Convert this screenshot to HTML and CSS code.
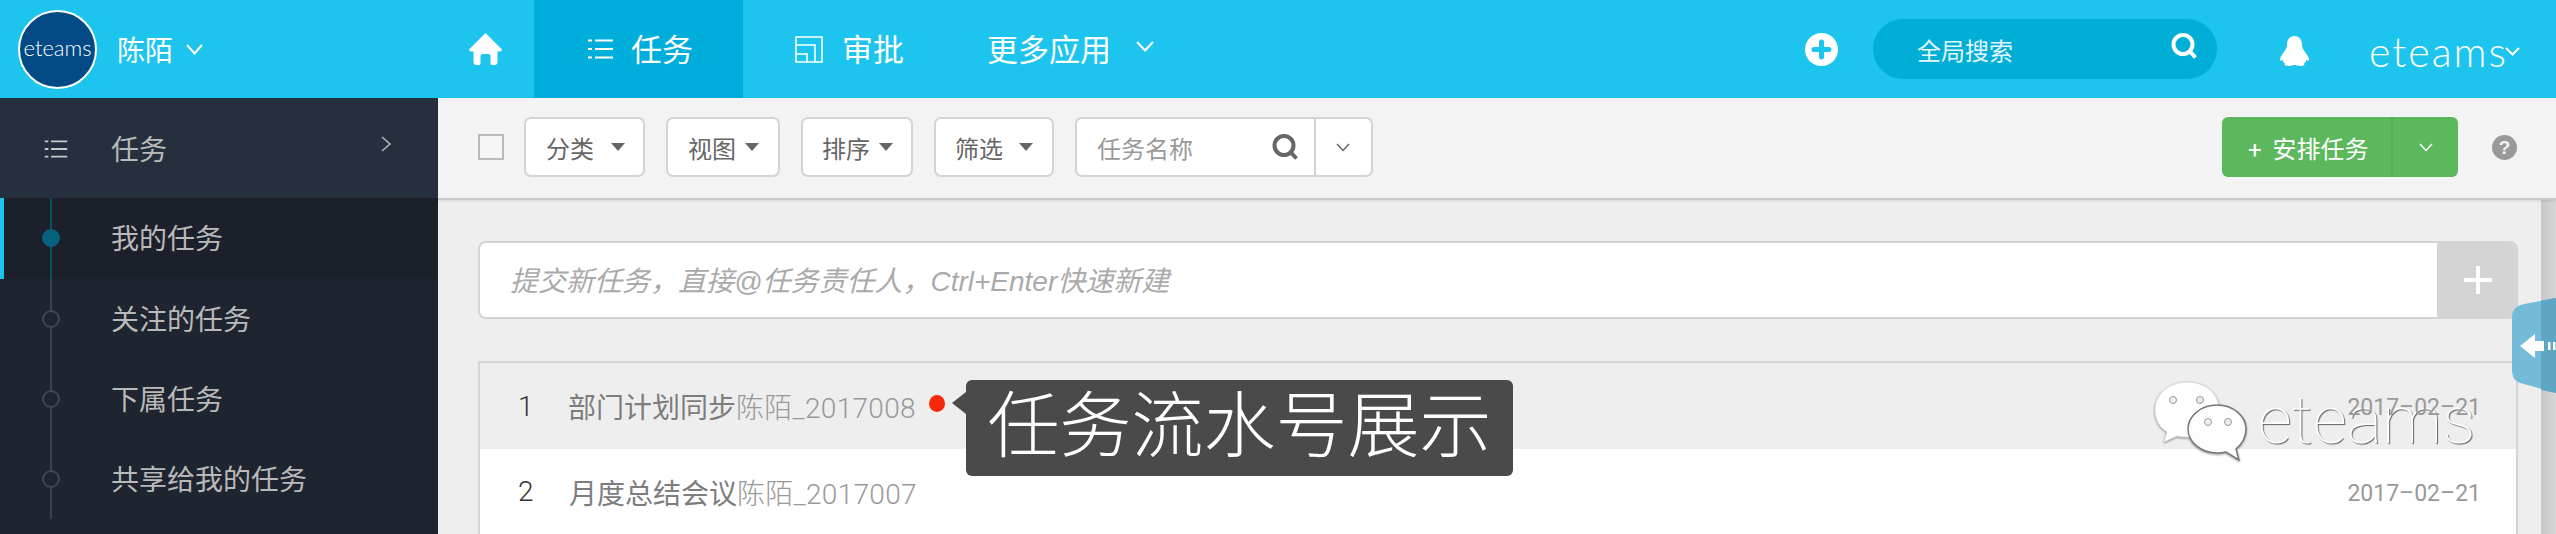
FILE: index.html
```html
<!DOCTYPE html>
<html lang="zh-CN">
<head>
<meta charset="utf-8">
<title>任务</title>
<link rel="stylesheet" href="styles.css">
</head>
<body>
<div class="page">
  <header class="hd">
    <div class="brand">
      <div class="logo">eteams</div>
      <span class="user">陈陌</span>
      <svg class="chev user-chev" viewBox="0 0 17 11"><path d="M1 1l7.500 8.500L16 1"/></svg>
    </div>
    <svg class="home" viewBox="0 0 33 32"><path d="M16.500 0L33 16.500q0 2-2 2h-2.500V29q0 3-3 3H23q-1.500 0-1.500-1.500V23q0-2-2-2h-6q-2 0-2 2v7.500Q11.500 32 10 32H7.500q-3 0-3-3V18.500H2q-2 0-2-2z"/></svg>
    <nav class="nav">
      <a class="tab active">
        <svg class="list-ic" viewBox="0 0 25 20"><path d="M0 1.500h4M7 1.500h18M0 10h4M7 10h18M0 18.500h4M7 18.500h18"/></svg>
        <span>任务</span>
      </a>
      <a class="tab approve">
        <svg class="appr-ic" viewBox="0 0 28 27"><path d="M1 1h26v25H1zM1 9h19v17M1 18h11v8"/></svg>
        <span>审批</span>
      </a>
      <a class="tab more">
        <span>更多应用</span>
        <svg class="chev more-chev" viewBox="0 0 18 11"><path d="M1 1l8 8.500L17 1"/></svg>
      </a>
    </nav>
    <div class="hd-right">
      <svg class="add" viewBox="0 0 33 33"><circle cx="16.500" cy="16.500" r="16.500" fill="#fff"/><path d="M16.500 9v15M9 16.500h15" stroke="#1dc4ee" stroke-width="5" stroke-linecap="round"/></svg>
      <div class="pill">
        <span>全局搜索</span>
        <svg class="mag" viewBox="0 0 27 26"><circle cx="12" cy="11.500" r="9.500"/><path d="M18.500 18l6 6.500"/></svg>
      </div>
      <svg class="qq" viewBox="0 0 31 30"><path d="M15.500 0c4.800 0 7.500 3.800 7.500 8.500 0 2.500.7 4 2 6 2.500 3.500 5 6.500 5 9 0 1.500-1 1.500-2.500.5-.3 1.500-1.200 2.500-2.500 3.300 1.300 1.400-.5 2.700-3.500 2.700-2.500 0-4-.5-6-1.200-2 .7-3.500 1.200-6 1.200-3 0-4.800-1.300-3.500-2.700-1.300-.8-2.200-1.800-2.500-3.300C2 25 1 25 1 23.500c0-2.500 2.500-5.500 5-9 1.300-2 2-3.500 2-6C8 3.800 10.700 0 15.500 0z"/></svg>
      <span class="word">eteams</span>
      <svg class="chev word-chev" viewBox="0 0 15 9"><path d="M1 1l6.500 6.500L14 1"/></svg>
    </div>
  </header>

  <div class="body">
    <aside class="side">
      <div class="side-title">
        <svg class="list-ic side-ic" viewBox="0 0 25 20"><path d="M0 1.500h4M7 1.500h18M0 10h4M7 10h18M0 18.500h4M7 18.500h18"/></svg>
        <span>任务</span>
        <svg class="side-arrow" viewBox="0 0 11 16"><path d="M1 1l8 7-8 7"/></svg>
      </div>
      <ul class="side-list">
        <li class="side-item on"><i class="dot"></i>我的任务</li>
        <li class="side-item"><i class="dot"></i>关注的任务</li>
        <li class="side-item"><i class="dot"></i>下属任务</li>
        <li class="side-item"><i class="dot"></i>共享给我的任务</li>
      </ul>
    </aside>

    <main class="main">
      <div class="toolbar">
        <span class="check"></span>
        <button class="btn b-cat">分类<i class="caret"></i></button>
        <button class="btn b-view">视图<i class="caret"></i></button>
        <button class="btn b-sort">排序<i class="caret"></i></button>
        <button class="btn b-filter">筛选<i class="caret"></i></button>
        <div class="find">
          <span class="find-text">任务名称</span>
          <svg class="find-mag" viewBox="0 0 27 26"><circle cx="12" cy="11.500" r="9.500"/><path d="M18.500 18l6 6.500"/></svg>
          <span class="find-more"><svg class="find-chev" viewBox="0 0 14 9"><path d="M1 1l6 6.500L13 1"/></svg></span>
        </div>
        <div class="green">
          <span class="green-main">+ 安排任务</span>
          <span class="green-more"><svg viewBox="0 0 14 9"><path d="M1 1l6 6.500L13 1"/></svg></span>
        </div>
        <span class="help">?</span>
      </div>

      <div class="content">
        <div class="col">
          <div class="quick">
            <span class="quick-text">提交新任务，直接@任务责任人，Ctrl+Enter快速新建</span>
            <span class="quick-add"><svg viewBox="0 0 28 28"><path d="M14 0v28M0 14h28"/></svg></span>
          </div>
          <div class="tasks">
            <div class="task first">
              <span class="num">1</span>
              <span class="name">部门计划同步<em>陈陌_2017008</em></span>
              <i class="red"></i>
              <span class="date">2017–02–21</span>
            </div>
            <div class="task">
              <span class="num">2</span>
              <span class="name second">月度总结会议<em>陈陌_2017007</em></span>
              <span class="date">2017–02–21</span>
            </div>
          </div>
        </div>
        <div class="stripe"></div>
      </div>
    </main>
  </div>

  <div class="tip">任务流水号展示</div>

  <svg class="pull" viewBox="0 0 44 95">
    <path d="M44 0L12 6Q0 8 0 20V72Q0 84 12 86L44 95z" fill="#74bad9"/>
    <path d="M29 2.500L44 0V95L29 92z" fill="#5ea6c4"/>
    <path d="M8 48L23 36V43H32V53H23V60z" fill="#fff"/>
    <path d="M36 44h2.500v8H36zM41 44h2.500v8H41z" fill="#fff"/>
  </svg>

  <div class="mark">
    <svg class="mark-ic" viewBox="0 0 94 80">
      <path d="M33 1C15 1 1 13 1 29c0 9 4 17 12 22l-3 10 13-6c3 1 7 1 10 1 18 0 32-12 32-28S51 1 33 1z" fill="#fff" stroke="#d8d8d8" stroke-width="1"/>
      <circle cx="19" cy="19" r="3.500" fill="#eee" stroke="#999"/>
      <circle cx="46" cy="19" r="3.500" fill="#eee" stroke="#999"/>
      <path d="M63 24C47 24 34 35 34 48s13 24 29 24c3 0 6 0 9-1l13 8-3-11c6-5 10-12 10-20 0-13-13-24-29-24z" fill="#fdfdfd" stroke="#777" stroke-width="1.500"/>
      <circle cx="54" cy="41" r="3.500" fill="#eee" stroke="#999"/>
      <circle cx="74" cy="41" r="3.500" fill="#eee" stroke="#999"/>
    </svg>
    <span class="mark-text">eteams</span>
  </div>
</div>
</body>
</html>
```

FILE: styles.css
```css
* { box-sizing: border-box; }
html, body { margin: 0; padding: 0; }
body { font-family: "Roboto", "Noto Sans CJK SC", sans-serif; background: #eee; }
.page { position: relative; width: 2556px; height: 534px; overflow: hidden; }
ul { list-style: none; margin: 0; padding: 0; }
em { font-style: normal; }
i { font-style: normal; }
svg { display: block; flex: none; }
.chev path, .side-arrow path, .find-chev, .green-more path { fill: none; }

/* header */
.hd { display: flex; align-items: center; height: 98px; background: #1dc4ee; color: #fff; }
.brand { display: flex; align-items: center; width: 469px; padding-left: 18px; }
.logo { display: flex; align-items: center; justify-content: center; width: 79px; height: 79px; padding-bottom: 4px; border-radius: 50%; background: #014a85; border: 2px solid #fff; color: #fff; font-family: "Lato", sans-serif; font-weight: 300; font-size: 22px; flex: none; }
.user { margin-left: 20px; font-size: 28px; }
.chev path { stroke: #fff; stroke-width: 2; }
.user-chev { width: 17px; height: 11px; margin-left: 13px; }
.home { width: 33px; height: 32px; fill: #fff; margin-right: 32px; }
.nav { display: flex; height: 98px; }
.tab { display: flex; align-items: center; font-size: 31px; height: 98px; }
.tab span { margin-top: -4px; }
.tab.active { width: 209px; padding-left: 54px; background: #00aedb; }
.list-ic { width: 25px; height: 20px; margin-right: 18px; fill: none; stroke: #fff; stroke-width: 2; }
.appr-ic { width: 28px; height: 27px; margin: 0 19px 0 52px; fill: none; stroke: #fff; stroke-width: 1.600; }
.more { margin-left: 83px; }
.more-chev { width: 18px; height: 11px; margin: -6px 0 0 25px; }
.hd-right { display: flex; align-items: center; margin-left: auto; padding-right: 36px; }
.add { width: 33px; height: 33px; margin-right: 35px; }
.pill { display: flex; align-items: center; justify-content: space-between; width: 344px; height: 60px; padding: 0 19px 0 44px; border-radius: 30px; background: #00aed6; font-size: 24px; color: #e4f8fd; }
.mag { width: 27px; height: 26px; fill: none; stroke: #fff; stroke-width: 4; margin-top: -6px; }
.qq { width: 31px; height: 30px; fill: #fff; margin: 3px 59px 0 62px; }
.word { font-family: "Lato", sans-serif; font-weight: 300; font-size: 41px; letter-spacing: 2px; line-height: 46px; width: 124px; margin-top: 6px; white-space: nowrap; }
.word-chev { width: 15px; height: 9px; margin: 5px 0 0 12px; }

/* layout */
.body { display: flex; height: 436px; }
.side { width: 438px; flex: none; background: #1e2530; color: #b9b9b9; font-size: 28px; }
.side-title { display: flex; align-items: center; height: 100px; padding: 0 0 3px 43px; background: #252f3e; border-top: 2px solid #20343c; }
.side-ic { width: 26px; height: 18px; margin: 3px 42px 0 0; stroke: #c9c9c9; }
.side-arrow { width: 11px; height: 16px; margin: -7px 0 0 214px; }
.side-arrow path { stroke: #bbb; stroke-width: 1.500; }
.side-item { position: relative; display: flex; align-items: center; height: 80px; padding: 0 0 3px 111px; }
.side-item::before { content: ""; position: absolute; left: 50px; top: 0; bottom: 0; width: 2px; background: #3a424d; }
.dot { position: absolute; left: 42px; top: 31px; width: 18px; height: 18px; border-radius: 50%; background: #1e2530; border: 2px solid #3f4751; }
.side-item.on { background: #1b202a; height: 81px; }
.side-item.on::before { background: #07506a; }
.side-item.on::after { content: ""; position: absolute; left: 0; top: 0; bottom: 0; width: 4px; background: #1dc4ee; }
.on .dot { background: #06617f; border-color: #06617f; }

/* toolbar */
.main { flex: 1; min-width: 0; display: flex; flex-direction: column; }
.toolbar { display: flex; align-items: center; height: 102px; flex: none; padding: 0 39px 2px 40px; background: #f3f3f3; border-bottom: 2px solid #c9c9c9; box-shadow: 0 1px 3px rgba(0,0,0,.1); font-size: 24px; color: #666; position: relative; }
.check { width: 26px; height: 26px; border: 2px solid #bbb; background: #f6f6f6; margin-right: 20px; flex: none; }
.btn { display: flex; align-items: center; height: 60px; margin: 0 21px 0 0; padding: 0; border: 2px solid #d4d4d4; border-radius: 7px; background: #fff; font: inherit; color: #666; flex: none; }
.b-cat { width: 121px; padding-left: 20px; }
.b-cat .caret { margin-left: 17px; }
.b-view { width: 114px; padding-left: 20px; }
.b-view .caret { margin-left: 9px; }
.b-sort { width: 112px; padding-left: 19px; }
.b-sort .caret { margin-left: 9px; }
.b-filter { width: 120px; padding-left: 19px; }
.b-filter .caret { margin-left: 16px; }
.caret { width: 0; height: 0; border: 7px solid transparent; border-top: 8px solid #666; border-bottom: 0; }
.find { display: flex; align-items: center; width: 298px; height: 60px; border: 2px solid #d4d4d4; border-radius: 7px; background: #fff; flex: none; }
.find-text { width: 195px; padding-left: 20px; color: #999; flex: none; }
.find-mag { width: 27px; height: 26px; fill: none; stroke: #666; stroke-width: 4; }
.find-more { display: flex; justify-content: center; align-items: center; height: 56px; width: 55px; margin-left: 15px; border-left: 2px solid #d4d4d4; flex: none; }
.find-chev { width: 14px; height: 9px; fill: none; stroke: #666; stroke-width: 1.500; }
.green { display: flex; align-items: center; height: 60px; width: 236px; margin-left: auto; border-radius: 6px; background: #5cb85c; color: #fff; flex: none; }
.green-main { width: 169px; padding-left: 26px; word-spacing: 5px; flex: none; }
.green-more { display: flex; align-items: center; justify-content: center; flex: 1; height: 60px; border-left: 2px solid #54ad54; }
.green-more svg { width: 14px; height: 9px; }
.green-more path { stroke: #fff; stroke-width: 1.500; }
.help { width: 25px; height: 25px; margin-left: 34px; border-radius: 50%; background: #999; color: #f3f3f3; font: 700 19px/25px "Liberation Sans", sans-serif; text-align: center; flex: none; }

/* content */
.content { flex: 1; min-height: 0; display: flex; }
.col { width: 2040px; margin-left: 40px; padding-top: 41px; flex: none; }
.stripe { width: 15px; margin-left: auto; background: linear-gradient(90deg, #c8c8c8, #d6d6d6); }
.quick { display: flex; align-items: center; height: 78px; background: #fff; border: 2px solid #d4d4d4; border-radius: 8px; overflow: hidden; }
.quick-text { flex: 1; padding: 0 0 2px 30px; font-family: "Liberation Sans", "Noto Sans CJK SC", sans-serif; font-size: 28px; font-style: italic; color: #aaa; }
.quick-add { display: flex; align-items: center; justify-content: center; width: 81px; height: 78px; background: #d4d4d4; margin-right: -2px; }
.quick-add svg { width: 28px; height: 28px; }
.quick-add path { stroke: #fff; stroke-width: 4; fill: none; }
.tasks { margin-top: 42px; border: 2px solid #d4d4d4; border-bottom: 0; height: 175px; background: #fff; }
.task { display: flex; align-items: center; height: 85px; font-size: 28px; color: #7d7d7d; }
.task.first { height: 86px; background: #eee; }
.num { width: 88px; padding-left: 38px; color: #333; flex: none; font-size: 28px; font-weight: 300; }
.second { margin-left: 1px; }
.name em { color: #999; letter-spacing: .3px; font-weight: 300; }
.red { width: 16px; height: 17px; margin: -6px 0 0 13px; border-radius: 50%; background: #f52a0a; flex: none; }
.date { position: relative; z-index: 2; margin: 3px 0 0 auto; padding-right: 35px; font-size: 23px; color: #999; }

/* overlays */
.tip { position: absolute; left: 966px; top: 380px; width: 547px; height: 96px; border-radius: 6px; background: #4a4a4a; color: #fff; font-size: 72px; font-weight: 300; line-height: 94px; text-align: center; white-space: nowrap; }
.tip::before { content: ""; position: absolute; left: -14px; top: 12px; width: 14px; height: 22px; background: #4a4a4a; clip-path: polygon(100% 0, 100% 100%, 0 50%); }
.pull { position: absolute; left: 2512px; top: 298px; width: 44px; height: 95px; }
.mark { position: absolute; z-index: 1; left: 2154px; top: 381px; display: flex; align-items: flex-start; }
.mark-ic { width: 94px; height: 80px; filter: drop-shadow(0 1px 1px rgba(0,0,0,.4)); }
.mark-text { margin: -3px 0 0 10px; font-family: "Roboto", sans-serif; font-weight: 100; font-size: 67px; line-height: 84px; color: #fff; text-shadow: 1px 1px 1px rgba(0,0,0,.6); }
```
